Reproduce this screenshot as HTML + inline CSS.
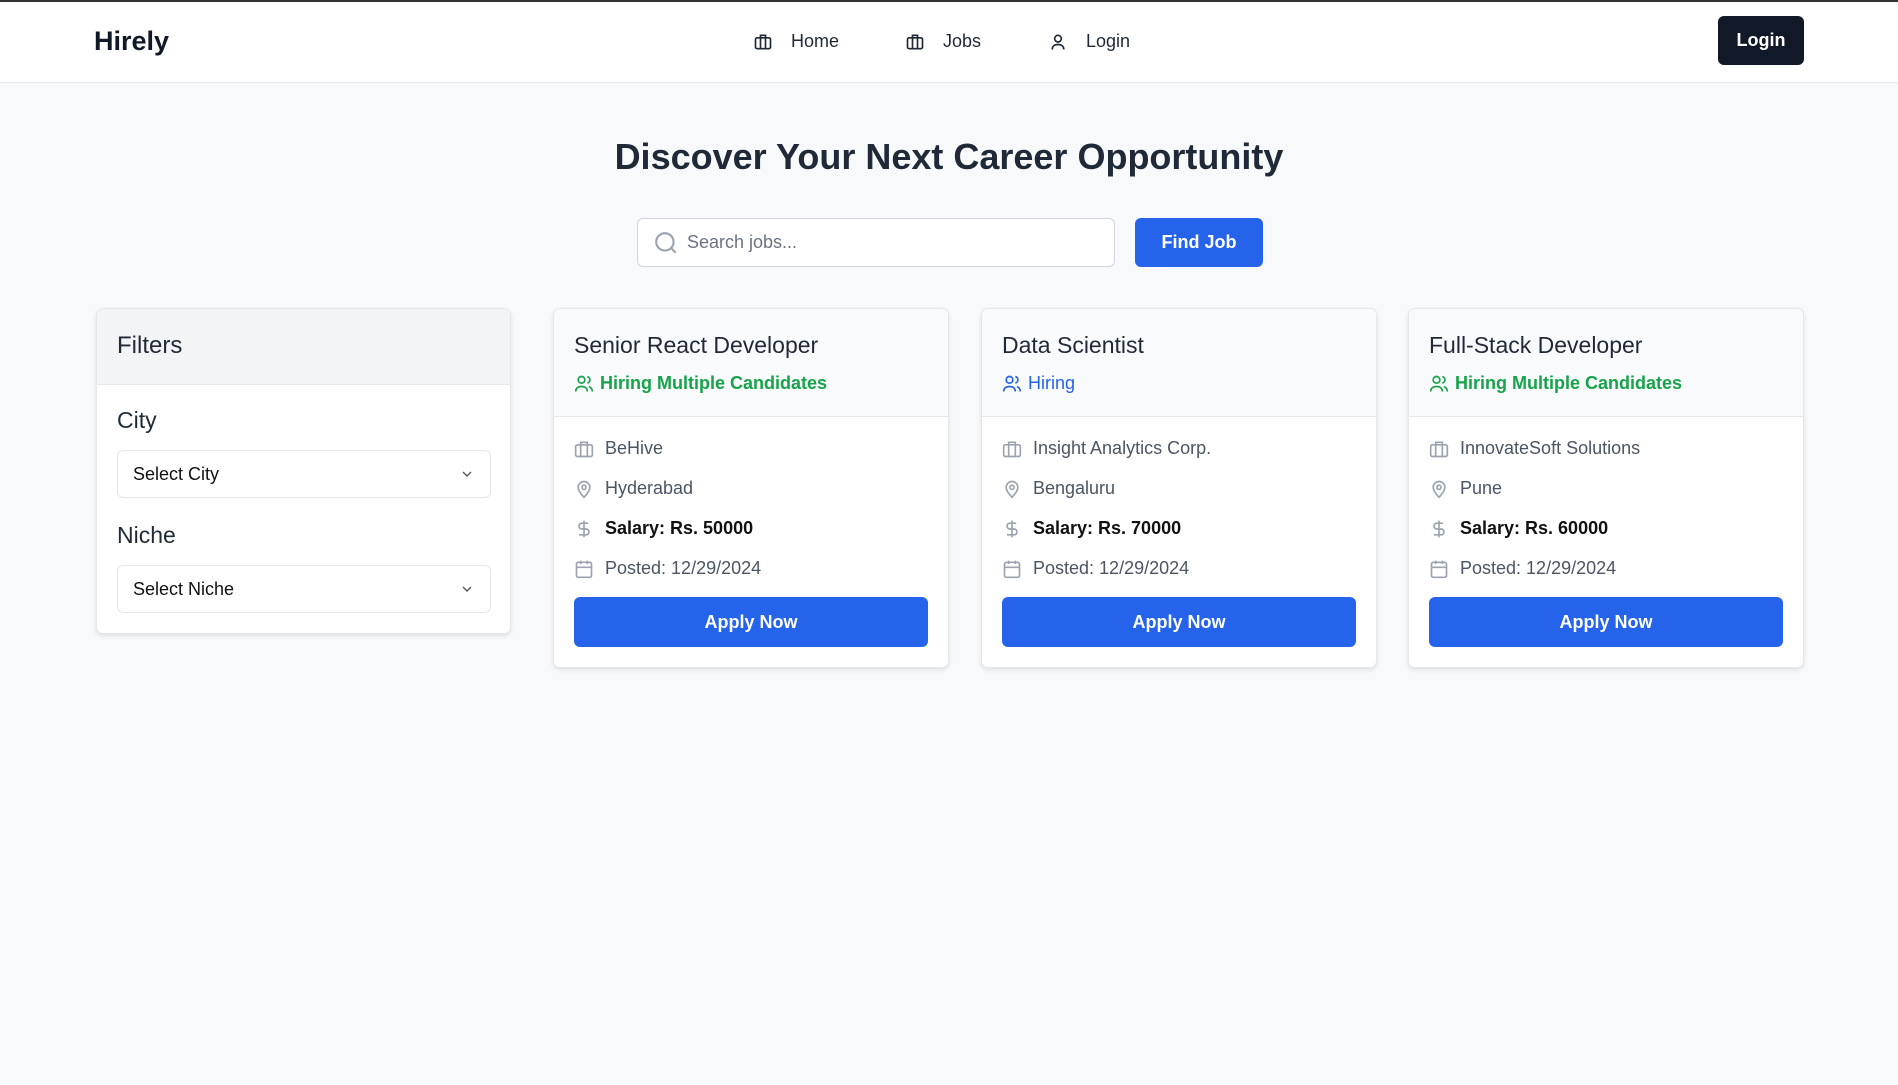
<!DOCTYPE html>
<html><head><meta charset="utf-8"><style>
*{box-sizing:border-box;margin:0;padding:0}
body{width:1898px;height:1085px;background:#f8f9fb;font-family:"Liberation Sans",sans-serif;color:#1f2937;position:relative;overflow:hidden;border-top:2px solid #333}
.nav{position:absolute;top:0;left:0;right:0;height:81px;background:#fff;border-bottom:1px solid #e5e7eb}
.logo{position:absolute;left:94px;top:24px;font-size:27px;font-weight:bold;color:#111827}
.nl{position:absolute;top:29px;font-size:18px;color:#1f2937;display:flex;align-items:center;gap:18px}
.nl svg{width:20px;height:20px}
.lb{position:absolute;left:1718px;top:14px;width:86px;height:49px;background:#111827;color:#fff;border-radius:6px;font-size:18px;font-weight:bold;display:flex;align-items:center;justify-content:center}
h1{position:absolute;left:0;right:0;top:134px;text-align:center;font-size:36px;font-weight:bold;color:#1f2937}
.search{position:absolute;left:637px;top:216px;width:478px;height:49px;background:#fff;border:1px solid #d1d5db;border-radius:6px;display:flex;align-items:center;padding-left:15px;gap:8px;color:#6b7280;font-size:18px}
.fj{position:absolute;left:1135px;top:216px;width:128px;height:49px;background:#2563eb;color:#fff;border-radius:6px;font-size:18px;font-weight:bold;display:flex;align-items:center;justify-content:center}
.card{position:absolute;top:306px;background:#fff;border:1px solid #e5e7eb;border-radius:7px;box-shadow:0 2px 4px rgba(0,0,0,.1);overflow:hidden}
.fh{height:76px;background:#f3f4f6;border-bottom:1px solid #e5e7eb;padding:23px 20px;font-size:24px}
.lab{position:absolute;left:20px;font-size:23px}
.sel{position:absolute;left:20px;width:374px;height:48px;border:1px solid #e5e7eb;border-radius:6px;padding:0 15px;display:flex;align-items:center;justify-content:space-between;font-size:18px;color:#111}
.jh{height:108px;background:#f9fafb;border-bottom:1px solid #e5e7eb;padding:23px 20px 0}
.jt{font-size:23px;color:#1f2937;margin-bottom:14px}
.hr{font-size:18px;font-weight:bold;display:flex;align-items:center;gap:6px}
.row{position:absolute;left:20px;display:flex;align-items:center;gap:11px;font-size:18px;color:#4b5563}
.row svg{width:20px;height:20px}
.ap{position:absolute;left:20px;right:20px;top:288px;height:50px;background:#2563eb;color:#fff;border-radius:6px;font-size:18px;font-weight:bold;display:flex;align-items:center;justify-content:center}
</style></head><body>
<div class="nav">
<div class="logo">Hirely</div>
<div class="nl" style="left:753px"><svg viewBox="0 0 24 24" fill="none" stroke="#1f2937" stroke-width="2"><rect x="3" y="7" width="18" height="13" rx="2"/><path d="M9 7V4h6v3M9 7v13M15 7v13"/></svg>Home</div>
<div class="nl" style="left:905px"><svg viewBox="0 0 24 24" fill="none" stroke="#1f2937" stroke-width="2"><rect x="3" y="7" width="18" height="13" rx="2"/><path d="M9 7V4h6v3M9 7v13M15 7v13"/></svg>Jobs</div>
<div class="nl" style="left:1048px"><svg viewBox="0 0 24 24" fill="none" stroke="#1f2937" stroke-width="2"><circle cx="12" cy="8" r="4"/><path d="M5 21c0-4 3-6 7-6s7 2 7 6"/></svg>Login</div>
<div class="lb">Login</div>
</div>
<h1>Discover Your Next Career Opportunity</h1>
<div class="search"><svg width="26" height="26" viewBox="0 0 24 24" fill="none" stroke="#9ca3af" stroke-width="2"><circle cx="11" cy="11" r="8"/><path d="M21 21l-4.3-4.3"/></svg>Search jobs...</div>
<div class="fj">Find Job</div>

<div class="card" style="left:96px;width:415px;height:326px">
<div class="fh">Filters</div>
<div class="lab" style="top:98px">City</div>
<div class="sel" style="top:141px">Select City<svg width="16" height="16" viewBox="0 0 24 24" fill="none" stroke="#555" stroke-width="2"><path d="M6 9l6 6 6-6"/></svg></div>
<div class="lab" style="top:213px">Niche</div>
<div class="sel" style="top:256px">Select Niche<svg width="16" height="16" viewBox="0 0 24 24" fill="none" stroke="#555" stroke-width="2"><path d="M6 9l6 6 6-6"/></svg></div>
</div>

<div class="card" style="left:553px;width:396px;height:360px">
<div class="jh"><div class="jt">Senior React Developer</div><div class="hr" style="color:#16a34a"><svg width="20" height="20" viewBox="0 0 24 24" fill="none" stroke="#16a34a" stroke-width="2"><circle cx="9" cy="7" r="4"/><path d="M2 21c0-4 3-6 7-6s7 2 7 6M16 3.1a4 4 0 010 7.8M22 21c0-3-2-5-4-6"/></svg>Hiring Multiple Candidates</div></div>
<div class="row" style="top:129px"><svg viewBox="0 0 24 24" fill="none" stroke="#9ca3af" stroke-width="2"><rect x="2" y="7" width="20" height="14" rx="2"/><path d="M8 7V4h8v3M8 7v14M16 7v14"/></svg>BeHive</div>
<div class="row" style="top:169px"><svg viewBox="0 0 24 24" fill="none" stroke="#9ca3af" stroke-width="2"><path d="M12 22s-7-7-7-12a7 7 0 0114 0c0 5-7 12-7 12z"/><circle cx="12" cy="10" r="2.5"/></svg>Hyderabad</div>
<div class="row" style="top:209px;color:#111;font-weight:bold"><svg viewBox="0 0 24 24" fill="none" stroke="#9ca3af" stroke-width="2"><path d="M12 2v20M17 5H9.5a3.5 3.5 0 000 7h5a3.5 3.5 0 010 7H6"/></svg>Salary: Rs. 50000</div>
<div class="row" style="top:249px"><svg viewBox="0 0 24 24" fill="none" stroke="#9ca3af" stroke-width="2"><rect x="3" y="4" width="18" height="18" rx="2"/><path d="M16 2v4M8 2v4M3 10h18"/></svg>Posted: 12/29/2024</div>
<div class="ap">Apply Now</div>
</div>

<div class="card" style="left:981px;width:396px;height:360px">
<div class="jh"><div class="jt">Data Scientist</div><div class="hr" style="color:#2563eb;font-weight:normal"><svg width="20" height="20" viewBox="0 0 24 24" fill="none" stroke="#2563eb" stroke-width="2"><circle cx="9" cy="7" r="4"/><path d="M2 21c0-4 3-6 7-6s7 2 7 6M16 3.1a4 4 0 010 7.8M22 21c0-3-2-5-4-6"/></svg>Hiring</div></div>
<div class="row" style="top:129px"><svg viewBox="0 0 24 24" fill="none" stroke="#9ca3af" stroke-width="2"><rect x="2" y="7" width="20" height="14" rx="2"/><path d="M8 7V4h8v3M8 7v14M16 7v14"/></svg>Insight Analytics Corp.</div>
<div class="row" style="top:169px"><svg viewBox="0 0 24 24" fill="none" stroke="#9ca3af" stroke-width="2"><path d="M12 22s-7-7-7-12a7 7 0 0114 0c0 5-7 12-7 12z"/><circle cx="12" cy="10" r="2.5"/></svg>Bengaluru</div>
<div class="row" style="top:209px;color:#111;font-weight:bold"><svg viewBox="0 0 24 24" fill="none" stroke="#9ca3af" stroke-width="2"><path d="M12 2v20M17 5H9.5a3.5 3.5 0 000 7h5a3.5 3.5 0 010 7H6"/></svg>Salary: Rs. 70000</div>
<div class="row" style="top:249px"><svg viewBox="0 0 24 24" fill="none" stroke="#9ca3af" stroke-width="2"><rect x="3" y="4" width="18" height="18" rx="2"/><path d="M16 2v4M8 2v4M3 10h18"/></svg>Posted: 12/29/2024</div>
<div class="ap">Apply Now</div>
</div>

<div class="card" style="left:1408px;width:396px;height:360px">
<div class="jh"><div class="jt">Full-Stack Developer</div><div class="hr" style="color:#16a34a"><svg width="20" height="20" viewBox="0 0 24 24" fill="none" stroke="#16a34a" stroke-width="2"><circle cx="9" cy="7" r="4"/><path d="M2 21c0-4 3-6 7-6s7 2 7 6M16 3.1a4 4 0 010 7.8M22 21c0-3-2-5-4-6"/></svg>Hiring Multiple Candidates</div></div>
<div class="row" style="top:129px"><svg viewBox="0 0 24 24" fill="none" stroke="#9ca3af" stroke-width="2"><rect x="2" y="7" width="20" height="14" rx="2"/><path d="M8 7V4h8v3M8 7v14M16 7v14"/></svg>InnovateSoft Solutions</div>
<div class="row" style="top:169px"><svg viewBox="0 0 24 24" fill="none" stroke="#9ca3af" stroke-width="2"><path d="M12 22s-7-7-7-12a7 7 0 0114 0c0 5-7 12-7 12z"/><circle cx="12" cy="10" r="2.5"/></svg>Pune</div>
<div class="row" style="top:209px;color:#111;font-weight:bold"><svg viewBox="0 0 24 24" fill="none" stroke="#9ca3af" stroke-width="2"><path d="M12 2v20M17 5H9.5a3.5 3.5 0 000 7h5a3.5 3.5 0 010 7H6"/></svg>Salary: Rs. 60000</div>
<div class="row" style="top:249px"><svg viewBox="0 0 24 24" fill="none" stroke="#9ca3af" stroke-width="2"><rect x="3" y="4" width="18" height="18" rx="2"/><path d="M16 2v4M8 2v4M3 10h18"/></svg>Posted: 12/29/2024</div>
<div class="ap">Apply Now</div>
</div>
</body></html>
